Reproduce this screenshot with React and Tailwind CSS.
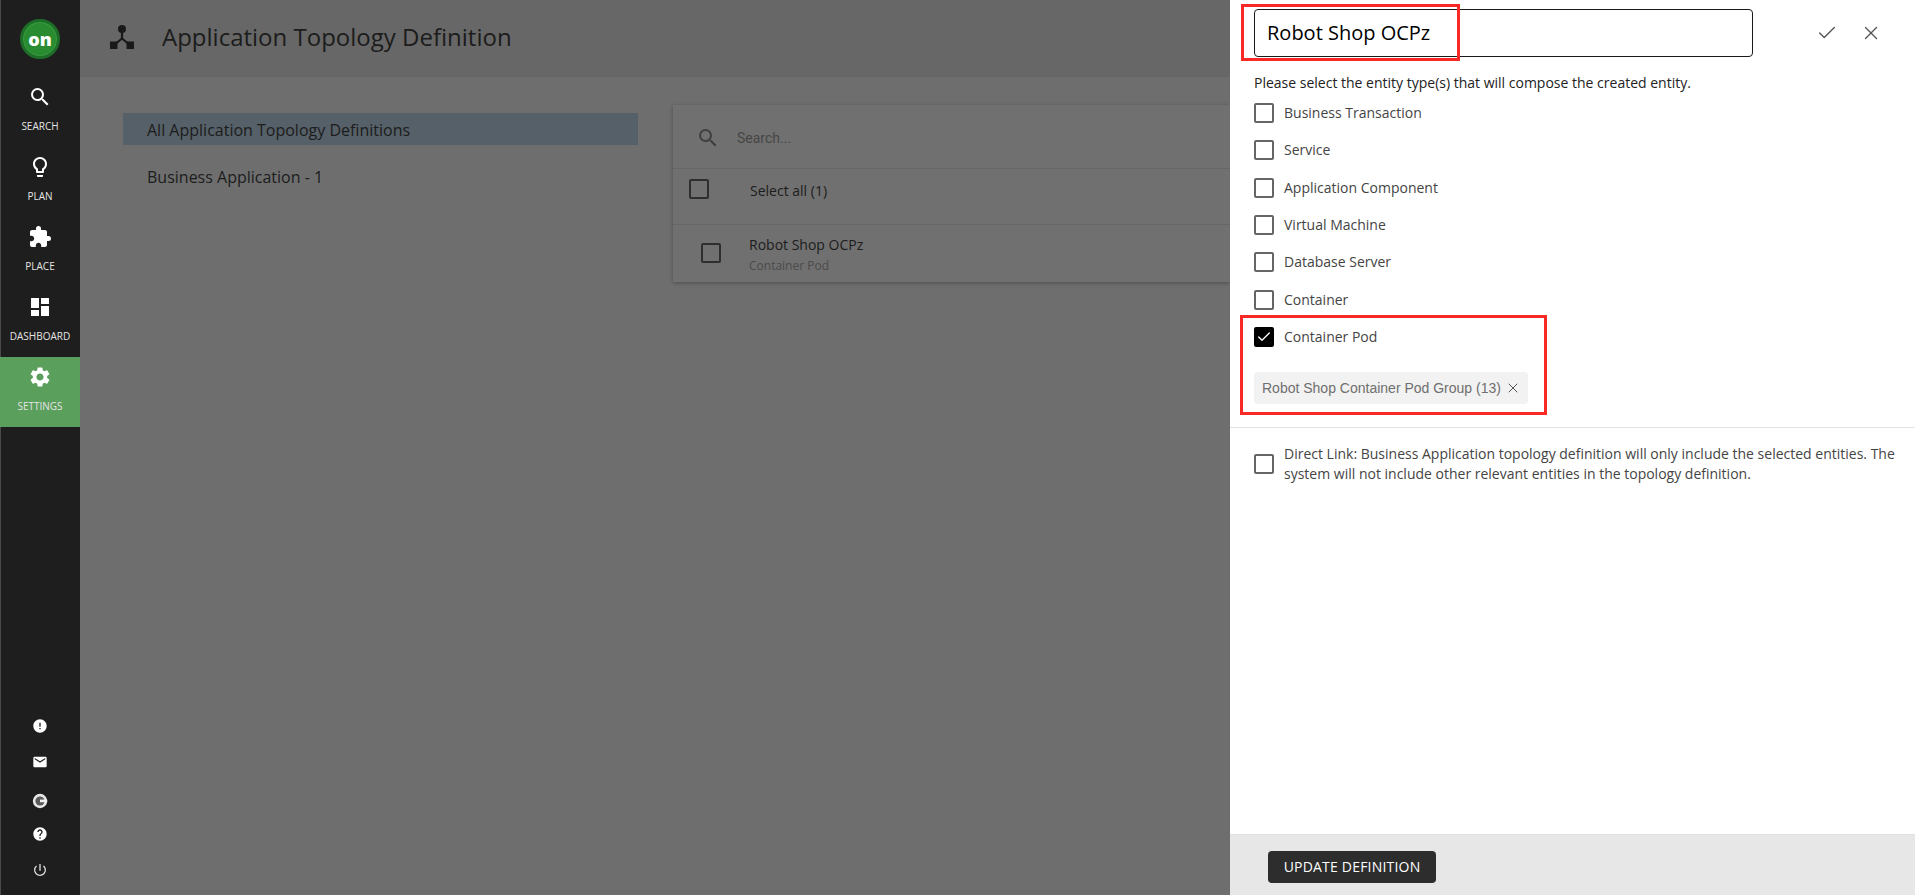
import React from 'react';
import { Check, X } from 'lucide-react';
import {
  MdSearch,
  MdOutlineLightbulb,
  MdExtension,
  MdDashboard,
  MdSettings,
  MdError,
  MdEmail,
  MdHelp,
  MdPowerSettingsNew,
} from 'react-icons/md';

const navigation = [
  { name: 'SEARCH', icon: MdSearch },
  { name: 'PLAN', icon: MdOutlineLightbulb },
  { name: 'PLACE', icon: MdExtension },
  { name: 'DASHBOARD', icon: MdDashboard },
  { name: 'SETTINGS', icon: MdSettings, active: true },
];

const entityTypes = [
  'Business Transaction',
  'Service',
  'Application Component',
  'Virtual Machine',
  'Database Server',
  'Container',
];

const Checkbox = ({ checked, className = 'border-[#666]' }) => (
  <div
    className={`flex h-5 w-5 shrink-0 items-center justify-center rounded-[2px] border-2 ${
      checked ? 'border-black bg-black' : className
    }`}
  >
    {checked && <Check className="h-4 w-4 text-white" strokeWidth={2} />}
  </div>
);

const TopologyIcon = () => (
  <svg viewBox="0 0 24 24" className="h-6 w-6 shrink-0 text-[#191919]" fill="currentColor">
    <circle cx="12" cy="4" r="4" />
    <rect x="0" y="16.5" width="7.5" height="7.5" />
    <rect x="16.5" y="16.5" width="7.5" height="7.5" />
    <path d="M12 7v6.5M12 13.5l-6 5M12 13.5l6 5" stroke="currentColor" strokeWidth="2.2" fill="none" />
  </svg>
);

const GIcon = () => (
  <svg viewBox="0 0 16 16" className="mt-[23px] h-4 w-4">
    <circle cx="8" cy="8" r="7.2" fill="#e8e8e8" />
    <circle cx="8" cy="8" r="4.6" fill="#5a5a5a" />
    <rect x="8" y="6.6" width="7.2" height="2.6" fill="#f2f2f2" />
  </svg>
);

const Sidebar = () => (
  <aside className="flex h-full w-20 shrink-0 flex-col bg-[#1e1e1e] text-white shadow-[inset_1px_0_0_#4a4a4a]">
    <div className="flex h-[77px] items-center justify-center">
      <div className="flex h-10 w-10 items-center justify-center rounded-full border-[3px] border-[#1d6f28] bg-[#2a8c30] shadow-[inset_0_0_0_1px_#3c9a42]">
        <span className="text-lg font-extrabold leading-none text-white">on</span>
      </div>
    </div>
    <nav>
      {navigation.map((item) => (
        <div
          key={item.name}
          className={`flex h-[70px] flex-col items-center pt-2 ${item.active ? 'bg-[#5a9f5c]' : ''}`}
        >
          <item.icon className="h-6 w-6" />
          <span className="mt-[9px] text-[10px] leading-[16px] text-[#e4e4e4]">{item.name}</span>
        </div>
      ))}
    </nav>
    <div className="mt-auto flex flex-col items-center pb-[17px]">
      <MdError className="h-4 w-4" />
      <MdEmail className="mt-5 h-4 w-4" />
      <GIcon />
      <MdHelp className="mt-[17px] h-4 w-4" />
      <MdPowerSettingsNew className="mt-5 h-4 w-4 text-[#dddddd]" />
    </div>
  </aside>
);

const Background = () => (
  <main className="flex h-full min-w-0 flex-1 flex-col bg-[#6e6e6e]">
    <header className="flex h-[77px] shrink-0 items-center gap-7 border-b border-[#656565] bg-[#676767] pb-[2px] pl-[30px]">
      <TopologyIcon />
      <h1 className="text-2xl font-normal text-[#1c1c1c]">Application Topology Definition</h1>
    </header>
    <div className="flex flex-1 items-start pl-[43px] pt-7">
      <div className="mt-2 w-[515px] shrink-0 text-[#1c1c1c]">
        <div className="flex h-8 items-center bg-[#566068] pl-6 pt-px text-base">All Application Topology Definitions</div>
        <div className="mt-[15px] flex h-8 items-center pl-6 pt-px text-base">Business Application - 1</div>
      </div>
      <section className="ml-[35px] h-[177px] flex-1 bg-[#707070] shadow-[0_1px_4px_rgba(0,0,0,0.3)]">
        <div className="flex h-16 items-center border-b border-[#666666] pl-[23px] pt-[2px]">
          <MdSearch className="h-[24px] w-[24px] text-[#3f3f3f]" />
          <span className="ml-[17px] font-['Roboto'] text-sm text-[#464646]">Search...</span>
        </div>
        <div className="flex h-14 items-start border-b border-[#666666] pl-4 pt-[10px]">
          <Checkbox className="border-[#2e2e2e]" />
          <span className="ml-[41px] text-sm leading-[24px] text-[#1c1c1c]">Select all (1)</span>
        </div>
        <div className="flex items-start pl-7 pt-[18px]">
          <Checkbox className="border-[#2e2e2e]" />
          <div className="-mt-2 ml-7">
            <div className="text-sm leading-[20px] text-[#1c1c1c]">Robot Shop OCPz</div>
            <div className="mt-px text-xs leading-[20px] text-[#4b4b4b]">Container Pod</div>
          </div>
        </div>
      </section>
    </div>
  </main>
);

const DefinitionPanel = () => (
  <aside className="relative flex h-full w-[685px] shrink-0 flex-col bg-white">
    <div className="flex-1">
      <div className="flex items-center pl-6 pt-[9px]">
        <div className="flex h-12 w-[499px] items-center rounded-[4px] border border-[#1a1a1a] pl-[12px] text-xl text-black">
          Robot Shop OCPz
        </div>
        <Check className="ml-[63px] h-[22px] w-[22px] text-[#555]" strokeWidth={1.5} />
        <X className="ml-[22px] h-[22px] w-[22px] text-[#555]" strokeWidth={1.5} />
      </div>
      <p className="mt-4 pl-6 text-sm leading-[20px] text-[#222]">
        Please select the entity type(s) that will compose the created entity.
      </p>
      <div className="mt-[10px] pl-6">
        {entityTypes.map((name) => (
          <label key={name} className="mb-[17.33px] flex h-5 items-center gap-[10px] text-sm text-[#444]">
            <Checkbox />
            {name}
          </label>
        ))}
        <label className="flex h-5 items-center gap-[10px] text-sm text-[#444]">
          <Checkbox checked />
          Container Pod
        </label>
        <div className="mt-[25px] inline-flex h-8 items-center rounded-[4px] bg-[#f2f2f2] pl-2 pr-[7px] font-['Liberation_Sans'] text-sm text-[#6f6f6f]">
          Robot Shop Container Pod Group (13)
          <X className="ml-[4px] h-[16px] w-[16px] text-[#555]" strokeWidth={1.5} />
        </div>
      </div>
      <div className="mt-[23px] border-t border-[#e2e2e2] pl-6 pr-5 pt-4">
        <div className="flex items-center gap-[10px] text-sm leading-[20px] text-[#444]">
          <Checkbox />
          <p>
            Direct Link: Business Application topology definition will only include the selected entities. The system
            will not include other relevant entities in the topology definition.
          </p>
        </div>
      </div>
    </div>
    <footer className="flex h-[61px] shrink-0 items-start border-t border-[#e0e0e0] bg-[#e7e7e7] pl-[38px] pt-4">
      <button className="h-8 w-[168px] rounded-[4px] bg-[#2d2d2d] text-sm font-medium tracking-[0.2px] text-white">
        UPDATE DEFINITION
      </button>
    </footer>

    {/* Red annotation boxes */}
    <div className="pointer-events-none absolute left-[11px] top-[4px] h-[57px] w-[219px] border-[3px] border-[#f92a26]" />
    <div className="pointer-events-none absolute left-[10px] top-[315px] h-[100px] w-[307px] border-[3px] border-[#f92a26]" />
  </aside>
);

export default function App() {
  return (
    <div className="flex h-screen w-full overflow-hidden font-['Open_Sans',sans-serif]">
      <Sidebar />
      <Background />
      <DefinitionPanel />
    </div>
  );
}
